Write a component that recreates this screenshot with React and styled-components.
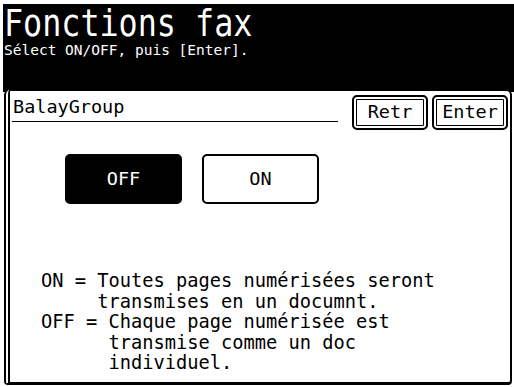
import React from 'react'
import styled, { createGlobalStyle } from 'styled-components'

const Global = createGlobalStyle`
    html, body {
        margin: 0;
        padding: 0;
        background: #fff;
    }
    body {
        font-family: "DejaVu Sans Mono", "Liberation Mono", monospace;
    }
`

export default function App() {
    return (
        <>
            <Global />
            <Screen>
                <Header>
                    <Title>Fonctions fax</Title>
                    <Prompt>Sélect ON/OFF, puis [Enter].</Prompt>
                </Header>

                <Panel>
                    <TopRow>
                        <GroupName>BalayGroup</GroupName>
                        <SoftKeys>
                            <SoftKey>Retr</SoftKey>
                            <SoftKey>Enter</SoftKey>
                        </SoftKeys>
                    </TopRow>

                    <Choices>
                        <Choice $active>OFF</Choice>
                        <Choice>ON</Choice>
                    </Choices>

                    <Notes>
                        <Note>
                            <Term $chars={5}>ON =</Term>
                            <Desc>
                                Toutes pages numérisées seront<br />
                                transmises en un documnt.
                            </Desc>
                        </Note>
                        <Note>
                            <Term $chars={6}>OFF =</Term>
                            <Desc>
                                Chaque page numérisée est<br />
                                transmise comme un doc<br />
                                individuel.
                            </Desc>
                        </Note>
                    </Notes>
                </Panel>
            </Screen>
        </>
    )
}

const Screen = styled.div`
    width: 514px;
    height: 387px;
    box-sizing: border-box;
    padding: 4px 0 0 3px;
    background: #fff;
    overflow: hidden;
    display: flex;
    flex-direction: column;
`

const Header = styled.header`
    flex: none;
    height: 88px;
    box-sizing: border-box;
    padding: 1px 0 0 1px;
    background: #000;
    color: #fff;
`

const Title = styled.h1`
    margin: 0;
    font-size: 38px;
    line-height: 36px;
    font-weight: normal;
    white-space: nowrap;
    transform: scaleX(0.835);
    transform-origin: left top;
`

const Prompt = styled.p`
    margin: 0;
    padding-top: 1px;
    font-size: 14.5px;
    line-height: 16px;
    white-space: nowrap;
`

const Panel = styled.section`
    flex: none;
    margin: -3px 0 0 1px;
    width: 508px;
    height: 296px;
    box-sizing: border-box;
    background: #fff;
    color: #000;
    border: 2px solid #000;
    border-left: 6px double #000;
    border-bottom-width: 3px;
    border-radius: 6px 6px 4px 4px;
    display: flex;
    flex-direction: column;
`

const TopRow = styled.div`
    display: flex;
    align-items: flex-start;
    padding: 4px 2px 0 2px;
`

const GroupName = styled.div`
    width: 326px;
    box-sizing: border-box;
    padding: 1px 0 3px 1px;
    font-size: 18.5px;
    line-height: 22px;
    border-bottom: 1px solid #000;
`

const SoftKeys = styled.div`
    display: flex;
    gap: 4px;
    margin-left: auto;
`

const SoftKey = styled.button`
    width: 76px;
    height: 35px;
    box-sizing: border-box;
    padding: 0;
    border: 2px solid #000;
    border-radius: 5px;
    background: #fff;
    box-shadow: inset 0 0 0 2px #fff, inset 0 0 0 3px #000;
    color: #000;
    font: 18.5px/1 "DejaVu Sans Mono", "Liberation Mono", monospace;
    display: flex;
    align-items: center;
    justify-content: center;
`

const Choices = styled.div`
    display: flex;
    gap: 20px;
    margin: 24px 0 0 55px;
`

const Choice = styled.button`
    width: 117px;
    height: 50px;
    box-sizing: border-box;
    padding: 0;
    border: 2px solid #000;
    border-radius: 5px;
    background: ${p => (p.$active ? '#000' : '#fff')};
    color: ${p => (p.$active ? '#fff' : '#000')};
    font: 18.5px/1 "DejaVu Sans Mono", "Liberation Mono", monospace;
    display: flex;
    align-items: center;
    justify-content: center;
`

const Notes = styled.div`
    margin: 67px 0 0 31px;
    font-size: 18.7px;
    line-height: 20.5px;
`

const Note = styled.div`
    display: flex;
    white-space: nowrap;
`

const Term = styled.span`
    flex: none;
    width: ${p => p.$chars}ch;
`

const Desc = styled.span`
    display: block;
`
